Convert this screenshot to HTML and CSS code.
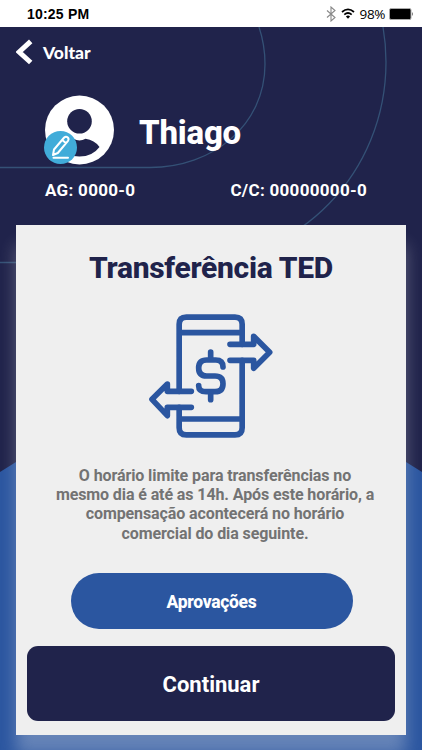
FILE: index.html
```
<!DOCTYPE html>
<html lang="pt-BR">
<head>
    <meta charset="UTF-8">
    <meta name="viewport" content="width=device-width, initial-scale=1.0">
    <title>Transferência TED</title>
    <link rel="stylesheet" href="styles.css">
</head>
<body>
    <div class="status-bar">
        <span class="time">10:25 PM</span>
        <div class="status-icons">
            <svg class="bluetooth" viewBox="0 0 10 16" width="10" height="16">
                <path d="M1 4.5L9 11.5L5 15V1L9 4.5L1 11.5"/>
            </svg>
            <svg class="wifi" viewBox="0 0 14 11" width="14" height="11">
                <path d="M1 4Q7 -1.4 13 4M3.3 6.6Q7 3.4 10.7 6.6"/>
                <path class="dot" d="M4.9 8.5Q7 6.7 9.1 8.5L7 10.7Z"/>
            </svg>
            <span class="percent">98%</span>
            <svg class="battery" viewBox="0 0 25 12" width="25" height="12">
                <rect x="0.5" y="0.5" width="21.5" height="11" rx="1.5" fill="#000" stroke="#aaa"/>
                <path d="M23 4Q25 6 23 8Z" fill="#777"/>
            </svg>
        </div>
    </div>

    <div class="screen">
        <svg class="backdrop" viewBox="0 27 422 723" width="422" height="723">
            <path class="line" d="M0 167.5H150C213 167.5 265 125 265 64Q265 45 259 27"/>
            <path class="line" d="M0 262.5H190C300 262.5 386 172 386 62Q386 44 383 27"/>
            <path class="floor" d="M0 472L16 462L211 350L406 462L422 472V750H0Z"/>
        </svg>

        <a href="#" class="back">
            <svg viewBox="0 0 17 26" width="17" height="26">
                <path d="M14.7 2.4L3.2 13L14.7 23.5"/>
            </svg>
            <span>Voltar</span>
        </a>

        <div class="profile">
            <div class="avatar">
                <svg viewBox="0 0 70 70" width="70" height="70">
                    <circle cx="34.5" cy="35" r="34.5" fill="#fff"/>
                    <circle cx="34.5" cy="26.3" r="12.3" fill="#20234b"/>
                    <path d="M14.5 51.5Q19.5 44 28.5 43.8Q34.5 47 40.5 43.8Q49.5 45 54.5 52Q47.5 61.5 34.5 61.5Q21.5 61.5 14.5 51.5Z" fill="#20234b"/>
                </svg>
                <svg class="edit" viewBox="0 0 33 33" width="33" height="33">
                    <circle cx="16.5" cy="16.5" r="16.5" fill="#41acd9" stroke="none"/>
                    <path d="M9 24L10 18.5L20.2 6.5Q22 5 23.8 6.5Q25.2 8 24 9.8L13.8 22Z M18.2 9L21.8 12M9.5 26.7H24"/>
                </svg>
            </div>
            <h1>Thiago</h1>
        </div>

        <div class="account">
            <span class="agency">AG: 0000-0</span>
            <span class="number">C/C: 00000000-0</span>
        </div>

        <div class="card">
            <h2>Transferência TED</h2>
            <svg class="transfer-icon" viewBox="0 0 372 372" width="124" height="124">
                <path d="M90.5 232V31Q90.5 9.5 112 9.5H258Q279.5 9.5 279.5 31V91M279.5 139V341Q279.5 362.5 258 362.5H112Q90.5 362.5 90.5 341V280M90.5 56H279.5M90.5 315H279.5"/>
                <path d="M127 232H55V210L9 256L55 305V280H127"/>
                <path d="M243 91H314V67L362 115L314 163V139H243"/>
                <path d="M222 159Q222 138 200 138H173Q149 138 149 162Q149 186 173 186H198Q222 186 222 209Q222 233 198 233H171Q149 233 149 215M185 114V138M185 233V257"/>
            </svg>
            <p class="notice">
                O horário limite para transferências no<br>
                mesmo dia é até as 14h. Após este horário, a<br>
                compensação acontecerá no horário<br>
                comercial do dia seguinte.
            </p>
            <button class="btn-approvals">Aprovações</button>
            <button class="btn-continue">Continuar</button>
        </div>
    </div>
</body>
</html>
```

FILE: styles.css
```
* {
    box-sizing: border-box;
}
body {
    margin: 0;
    width: 422px;
    height: 750px;
    overflow: hidden;
    font-family: Roboto, Arial, sans-serif;
    background-color: #20234b;
}
.status-bar {
    display: flex;
    justify-content: space-between;
    align-items: center;
    height: 27px;
    padding: 0 8px 0 27px;
    background-color: #fff;
    color: #000;
}
.time {
    font-family: "Liberation Sans", Arial, sans-serif;
    font-size: 14px;
    font-weight: bold;
    letter-spacing: 0.2px;
    padding-top: 1px;
}
.status-icons {
    display: flex;
    align-items: center;
}
.bluetooth {
    fill: none;
    stroke: #888;
    stroke-width: 1.1;
    margin-right: 5px;
}
.wifi {
    fill: none;
    stroke: #000;
    stroke-width: 1.7;
    margin-right: 5px;
}
.wifi .dot {
    fill: #000;
    stroke: none;
}
.percent {
    font-family: "Open Sans", sans-serif;
    font-size: 13.5px;
    letter-spacing: -0.4px;
    margin-right: 4px;
}
.screen {
    position: relative;
    height: 723px;
}
.backdrop {
    position: absolute;
    top: 0;
    left: 0;
    z-index: -1;
}
.backdrop .line {
    fill: none;
    stroke: #345176;
    stroke-width: 1.3;
}
.backdrop .floor {
    fill: #2b56a0;
}
.back {
    display: flex;
    align-items: center;
    gap: 10px;
    height: 50px;
    padding-left: 16px;
    color: #fff;
    font-family: Lato, sans-serif;
    font-size: 17.5px;
    font-weight: 900;
    text-decoration: none;
}
.back svg {
    fill: none;
    stroke: #fff;
    stroke-width: 5;
}
.profile {
    display: flex;
    align-items: center;
    gap: 24px;
    height: 70px;
    margin-top: 18px;
    padding-left: 45px;
}
.avatar {
    position: relative;
    width: 70px;
    height: 70px;
}
.edit {
    position: absolute;
    left: -1px;
    bottom: 1px;
    fill: none;
    stroke: #fff;
    stroke-width: 2;
    stroke-linecap: round;
    stroke-linejoin: round;
}
h1 {
    margin: 5px 0 0;
    color: #fff;
    font-size: 33px;
    font-weight: 800;
    letter-spacing: -0.2px;
}
.account {
    display: flex;
    justify-content: space-between;
    margin-top: 15px;
    padding: 0 55px 0 45px;
    color: #fff;
    font-size: 17px;
    line-height: 20px;
    font-weight: bold;
    letter-spacing: 0.3px;
}
.card {
    display: flex;
    flex-direction: column;
    align-items: center;
    height: 510px;
    margin: 25px 16px 0;
    padding: 24px 11px 0;
    background-color: #efefef;
    box-shadow: 0 20px 16px rgba(239, 239, 239, 0.3);
}
h2 {
    margin: 0;
    color: #20234b;
    font-size: 30px;
    line-height: 38px;
    font-weight: 800;
    letter-spacing: -0.3px;
}
.transfer-icon {
    margin-top: 27px;
    fill: none;
    stroke: #2b56a0;
    stroke-width: 17;
    stroke-linecap: round;
    stroke-linejoin: round;
}
.notice {
    margin: 28px 0 0;
    padding-left: 8px;
    color: #737373;
    font-size: 16px;
    line-height: 19.2px;
    font-weight: bold;
    letter-spacing: -0.1px;
    text-align: center;
    white-space: nowrap;
}
button {
    border: none;
    color: #fff;
    font-family: Roboto, Arial, sans-serif;
    font-weight: bold;
    cursor: pointer;
}
.btn-approvals {
    width: 282px;
    height: 56px;
    margin: 30px 0 0 1px;
    padding-top: 3px;
    border-radius: 28px;
    background-color: #2b56a0;
    font-size: 17.5px;
    font-weight: 800;
    letter-spacing: -0.3px;
}
.btn-continue {
    width: 368px;
    height: 75px;
    margin-top: 17px;
    padding-top: 4px;
    border-radius: 11px;
    background-color: #20234b;
    font-size: 22px;
}
```
